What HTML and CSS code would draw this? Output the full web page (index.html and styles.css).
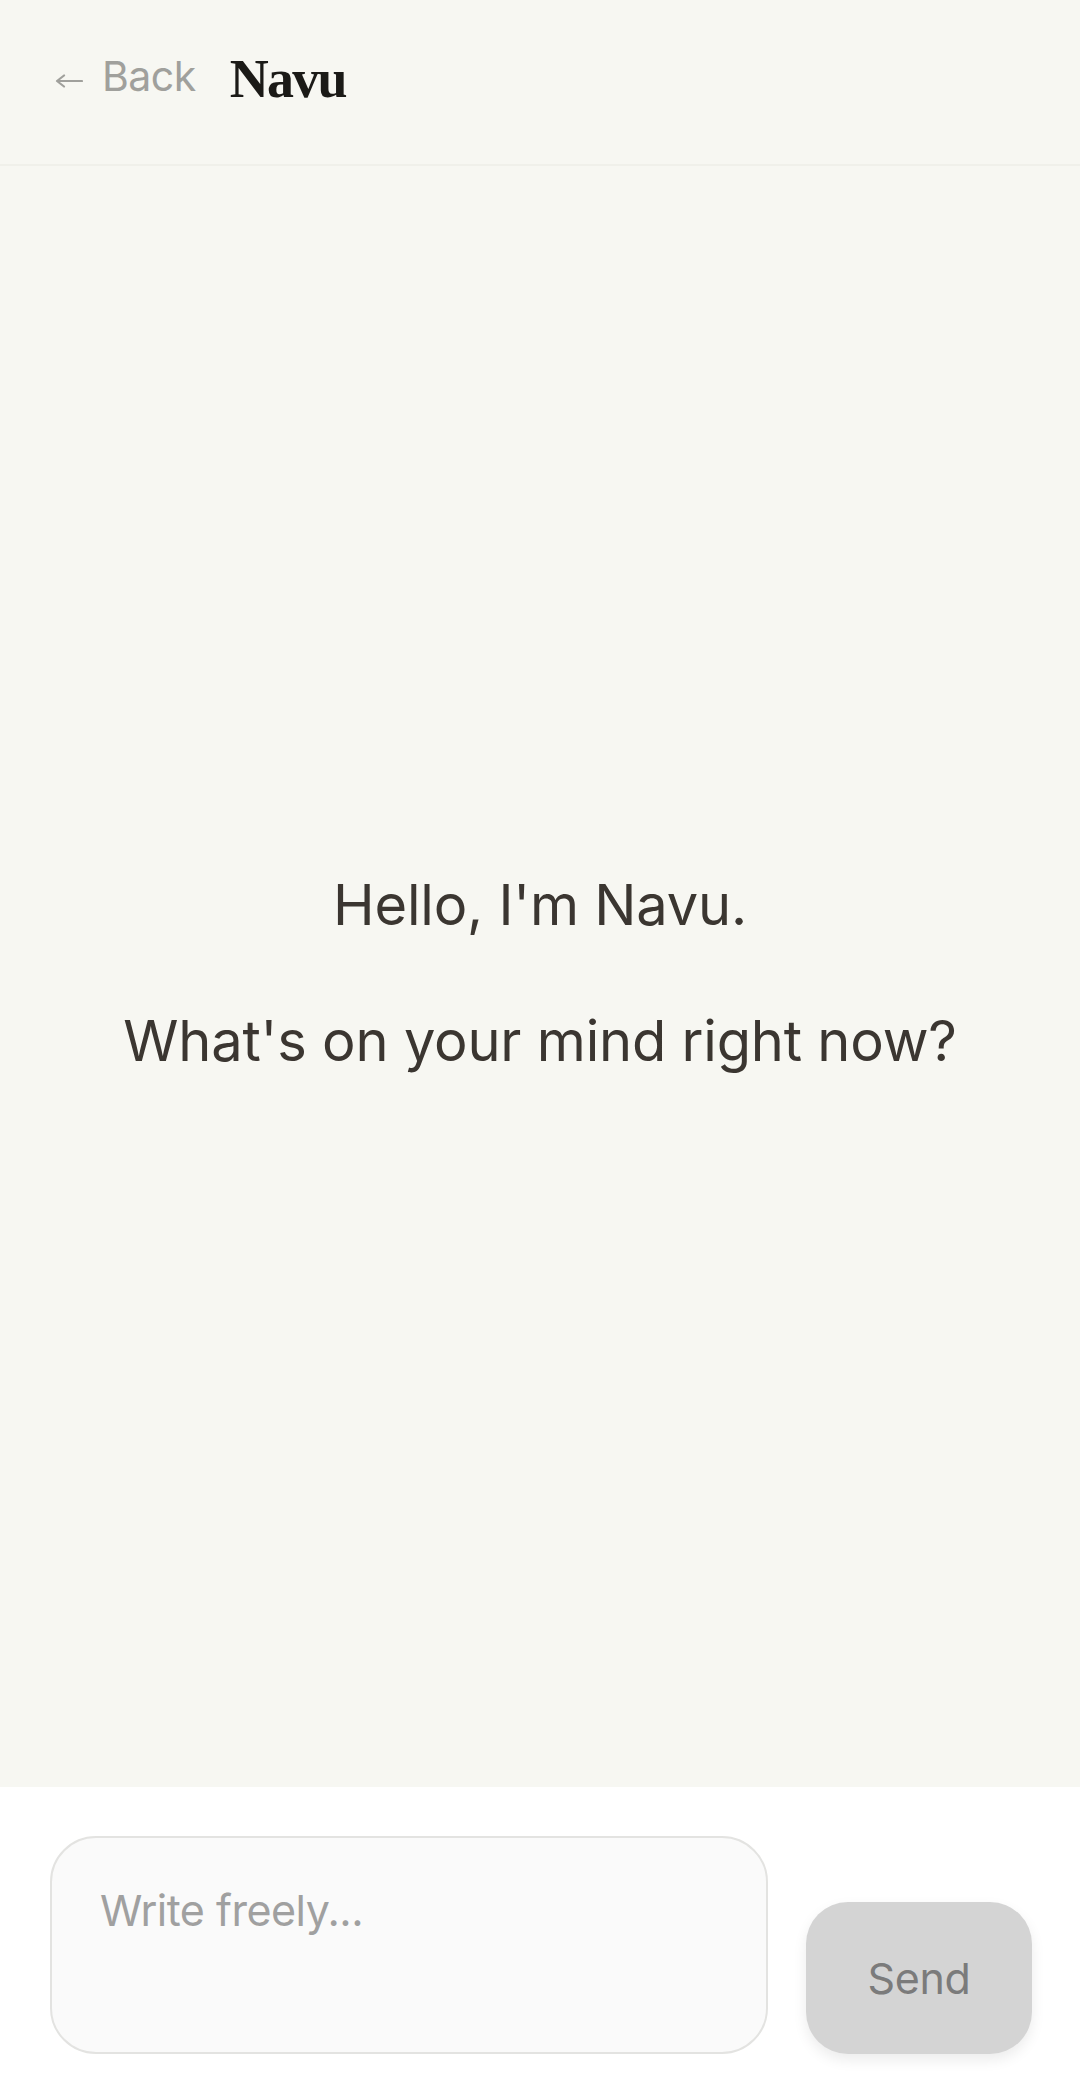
FILE: index.html
```html
<!DOCTYPE html>
<html lang="en">
<head>
<meta charset="utf-8">
<title>Navu</title>
<link rel="stylesheet" href="styles.css">
</head>
<body>
<div class="app">
  <header class="topbar">
    <a class="back" href="#">
      <svg class="back-arrow" viewBox="0 0 28 16" width="28" height="16" aria-hidden="true">
        <path d="M27 8H2M9 2.5L2 8l7 5.5" fill="none" stroke="currentColor" stroke-width="2.2" stroke-linecap="round" stroke-linejoin="round"/>
      </svg>
      <span>Back</span>
    </a>
    <h1 class="brand">Navu</h1>
  </header>
  <main class="chat">
    <div class="intro">
      <p class="intro-line">Hello, I'm Navu.</p>
      <p class="intro-line">What's on your mind right now?</p>
    </div>
  </main>
  <footer class="composer">
    <textarea class="composer-input" placeholder="Write freely..."></textarea>
    <button class="send-btn" type="button">Send</button>
  </footer>
</div>
</body>
</html>
```

FILE: styles.css
```css
* { box-sizing: border-box; }

html, body {
  margin: 0;
  padding: 0;
  background: #ffffff;
}

body {
  font-family: Inter, "Noto Sans", "Liberation Sans", sans-serif;
  color: #3b3631;
}

.app {
  min-height: 2100px;
  display: flex;
  flex-direction: column;
}

.topbar {
  height: 166px;
  display: flex;
  align-items: center;
  gap: 34px;
  padding: 0 0 12px 55px;
  background: #f7f7f2;
  border-bottom: 2px solid #f0f0ea;
}

.back {
  display: flex;
  align-items: center;
  gap: 19px;
  color: #a0a09c;
  text-decoration: none;
  font-size: 41px;
  letter-spacing: -0.5px;
}

.back-arrow {
  width: 28px;
  height: 16px;
  margin-top: 10px;
}

.brand {
  margin: 0;
  font-family: "Liberation Serif", "DejaVu Serif", serif;
  font-weight: 700;
  font-size: 54px;
  letter-spacing: -1.8px;
  color: #1b1a17;
  padding-top: 6px;
}

.chat {
  flex: 1;
  background: #f7f7f2;
  display: flex;
  align-items: center;
  justify-content: center;
  padding-bottom: 8px;
}

.intro {
  display: flex;
  flex-direction: column;
  align-items: center;
  gap: 58px;
}

.intro-line {
  margin: 0;
  font-size: 56px;
  line-height: 78px;
  letter-spacing: -0.2px;
  color: #3b3631;
  text-align: center;
}

.composer {
  height: 313px;
  display: flex;
  align-items: flex-end;
  gap: 38px;
  padding: 49px 48px 46px 50px;
  background: #ffffff;
}

.composer-input {
  flex: 1;
  height: 218px;
  resize: none;
  border: 2.5px solid #e3e3e1;
  border-radius: 46px;
  background: #fafafa;
  padding: 46px 48px;
  font-family: inherit;
  font-size: 43px;
  color: #3b3631;
  outline: none;
}

.composer-input::placeholder {
  color: #a0a0a0;
  letter-spacing: -0.5px;
}

.send-btn {
  width: 226px;
  height: 152px;
  border: none;
  border-radius: 42px;
  background: #d4d4d4;
  color: #7b7b7b;
  font-family: inherit;
  font-size: 43px;
  letter-spacing: -0.3px;
  box-shadow: 0 6px 14px rgba(0, 0, 0, 0.08);
  cursor: pointer;
}
```
